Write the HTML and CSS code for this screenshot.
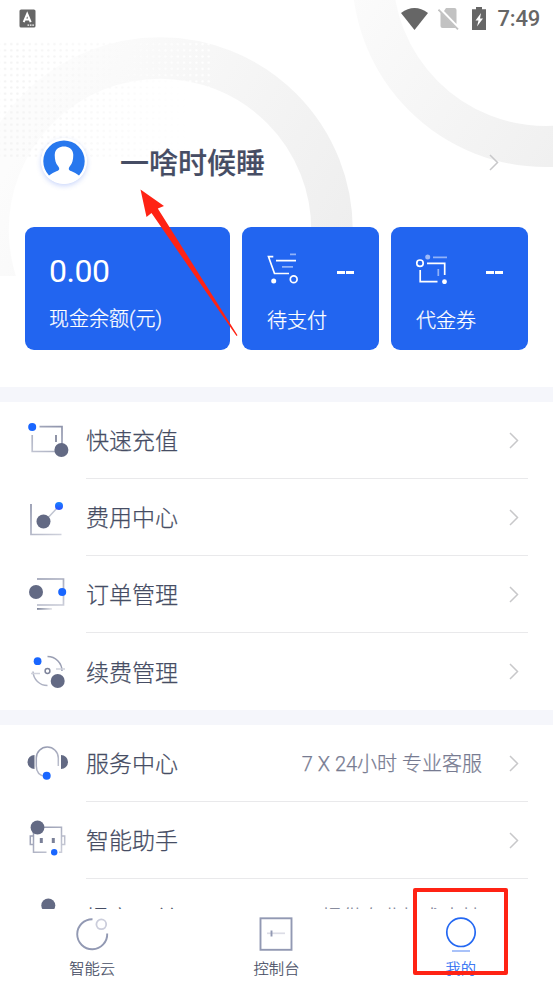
FILE: index.html
```
<!DOCTYPE html>
<html lang="zh-CN">
<head>
<meta charset="utf-8">
<title>我的</title>
<link rel="stylesheet" href="styles.css">
</head>
<body>
<div class="screen">
  <section class="hero">
    <svg class="hero-bg" width="553" height="276" viewBox="0 0 553 276">
      <defs>
        <linearGradient id="ringA" gradientUnits="userSpaceOnUse" x1="40" y1="110" x2="330" y2="276"><stop offset="0" stop-color="#fcfcfc"/><stop offset="1" stop-color="#eeeeee"/></linearGradient>
        <linearGradient id="ringB" gradientUnits="userSpaceOnUse" x1="350" y1="0" x2="560" y2="150"><stop offset="0" stop-color="#fbfbfb"/><stop offset="1" stop-color="#f0f0f0"/></linearGradient>
        <linearGradient id="dotFade" gradientUnits="userSpaceOnUse" x1="0" y1="0" x2="190" y2="0"><stop offset="0" stop-color="#f1f1f1"/><stop offset="1" stop-color="#fff"/></linearGradient>
        <pattern id="dots" patternUnits="userSpaceOnUse" x="2" y="41" width="6.17" height="6.2"><circle cx="3.1" cy="3.1" r="1.2" fill="#fff"/></pattern>
        <mask id="dotMask"><rect x="0" y="41" width="211" height="117" fill="url(#dots)"/></mask>
      </defs>
      <circle cx="160" cy="230" r="172" fill="none" stroke="url(#ringA)" stroke-width="41.5"/>
      <circle cx="546" cy="-27" r="173.5" fill="none" stroke="url(#ringB)" stroke-width="41"/>
      <rect x="0" y="41" width="211" height="117" fill="url(#dotFade)" mask="url(#dotMask)"/>
    </svg>
    <header class="status">
      <svg width="17" height="19" viewBox="0 0 17 19"><rect x=".5" y=".5" width="16" height="18" rx="1.6" fill="#666"/><path d="M4.7 13.2 8.2 4.9 11.7 13.2M6 10.6h4.400" fill="none" stroke="#fff" stroke-width="2"/><path d="M8.500 16.200h7" stroke="#fff" stroke-width="1.200" stroke-dasharray="1.6 .8"/></svg>
      <div class="status-right">
        <svg width="27" height="22" viewBox="0 0 27 22"><path d="M0 5Q13.500-5 27 5L13.500 22Z" fill="#666"/></svg>
        <svg class="sim" width="21" height="23" viewBox="0 0 21 23"><path d="M8 1h8.500q2 0 2 2v14L6 4Z" fill="#c2c2c2"/><path d="M2.500 5.500 18 21H4.500q-2 0-2-2Z" fill="#c2c2c2"/><path d="M1.500 1.500 20 20.500" stroke="#fff" stroke-width="1.500"/><path d="M.5 2.700 20 22.300" stroke="#c2c2c2" stroke-width="1.700"/></svg>
        <svg class="battery" width="14" height="23" viewBox="0 0 14 23"><path d="M4 0h6v2.300h4V23H0V2.300h4Z" fill="#666"/><path d="M9 6 3.500 13.500h3L5 19.500 11 11.500H8Z" fill="#fff"/></svg>
        <span class="time">7:49</span>
      </div>
    </header>
    <div class="profile">
      <svg class="avatar" width="46" height="46" viewBox="0 0 46 46"><circle cx="23" cy="23" r="23" fill="#fff"/><path d="M8 37.500A20.700 20.700 0 1 1 38 37.500Q34.500 34.500 30 33C27.500 32 27 30.500 29 28C31.500 25.500 32.500 20 32.200 16C31.500 10.500 27.500 8.500 23 8.500S14.500 10.500 13.800 16C13.500 20 14.500 25.500 17 28C19 30.500 18.500 32 16 33Q11.500 34.500 8 37.500Z" fill="#2878ee"/></svg>
      <h1 class="name">一啥时候睡</h1>
      <svg class="chev" width="10" height="17" viewBox="0 0 10 17"><path d="m1 1 7.500 7.500L1 16"/></svg>
    </div>
    <div class="cards">
      <div class="card balance"><div class="amount">0.00</div><div class="label">现金余额(元)</div></div>
      <div class="card">
        <div class="card-top">
          <svg width="32" height="31" viewBox="0 0 32 31" fill="none" stroke="#fff" stroke-width="1.700"><path d="M6.300 3.700H1.500L7.500 20.500H22M9 7.700H29"/><path d="M23 1.300h6M15 13.800h11" opacity=".5"/><circle cx="26.700" cy="26.300" r="3.400"/><circle cx="6.700" cy="28" r="2.500" fill="#fff" stroke="none"/></svg>
          <span class="dash"></span>
        </div>
        <div class="label">待支付</div>
      </div>
      <div class="card">
        <div class="card-top">
          <svg width="32" height="31" viewBox="0 0 32 31" fill="none" stroke="#fff" stroke-width="1.700"><circle cx="4" cy="10.200" r="3.200"/><path d="M11 10.300H28.700V22M4.200 17V28.700H21.500"/><path d="M17 4.300h14M22.300 16v7" opacity=".5"/><circle cx="11.700" cy="4" r="2.500" fill="#9db9f8" stroke="none"/><circle cx="28.500" cy="28.700" r="2.400" fill="#fff" stroke="none"/></svg>
          <span class="dash"></span>
        </div>
        <div class="label">代金券</div>
      </div>
    </div>
  </section>

  <section class="menu">
    <svg class="defs" width="0" height="0"><defs>
      <linearGradient id="ln" gradientUnits="userSpaceOnUse" x1="40" y1="0" x2="6" y2="40"><stop offset="0" stop-color="#858ba4"/><stop offset="1" stop-color="#c9ccd8"/></linearGradient>
      <linearGradient id="ln2" gradientUnits="userSpaceOnUse" x1="4" y1="0" x2="34" y2="40"><stop offset="0" stop-color="#858ba4"/><stop offset="1" stop-color="#d2d4de"/></linearGradient>
      <linearGradient id="bl" x1="0" y1="0" x2="0" y2="1"><stop offset="0" stop-color="#1683ff"/><stop offset="1" stop-color="#2c4dff"/></linearGradient>
      <linearGradient id="fd"><stop offset="0" stop-color="#7c8399"/><stop offset="1" stop-color="#e6e7ec"/></linearGradient>
    </defs></svg>
    <div class="row">
      <svg class="icon" width="44" height="40" viewBox="0 0 44 40"><path d="M13.500 6.700H36V24M6.200 15V31.500H29" fill="none" stroke="url(#ln)" stroke-width="1.700"/><path d="M30 15v7" stroke="#7c8298" stroke-width="1.700"/><circle cx="6.200" cy="7" r="4" fill="#1966ff"/><circle cx="35.400" cy="30" r="7" fill="#636a84"/></svg>
      <div class="cell"><span>快速充值</span><svg class="chev" width="10" height="17" viewBox="0 0 10 17"><path d="m1 1 7.500 7.500L1 16"/></svg></div>
    </div>
    <div class="row">
      <svg class="icon" width="44" height="40" viewBox="0 0 44 40"><path d="M5 7V37.500H35.500" fill="none" stroke="url(#ln2)" stroke-width="1.700"/><path d="M18 25 33 9" stroke="#bfc3d0" stroke-width="1.500"/><circle cx="33" cy="9" r="4" fill="url(#bl)"/><circle cx="17.500" cy="24.500" r="7" fill="#636a84"/></svg>
      <div class="cell"><span>费用中心</span><svg class="chev" width="10" height="17" viewBox="0 0 10 17"><path d="m1 1 7.500 7.500L1 16"/></svg></div>
    </div>
    <div class="row">
      <svg class="icon" width="44" height="40" viewBox="0 0 44 40"><path d="M11 5H37.500V31H11" fill="none" stroke="url(#ln2)" stroke-width="1.700"/><rect x="11" y="34" width="15" height="1.800" fill="url(#fd)"/><circle cx="10" cy="18" r="7" fill="#636a84"/><circle cx="36.200" cy="18" r="4" fill="#1966ff"/></svg>
      <div class="cell"><span>订单管理</span><svg class="chev" width="10" height="17" viewBox="0 0 10 17"><path d="m1 1 7.500 7.500L1 16"/></svg></div>
    </div>
    <div class="row">
      <svg class="icon" width="44" height="40" viewBox="0 0 44 40"><g fill="none" stroke-width="1.500"><path d="M21.500 5.500A14.500 14.500 0 0 1 36 20" stroke="#9a9fb3"/><path d="M7 20.500A14.500 14.500 0 0 0 21.500 34.500" stroke="#aeb2c3"/><path d="M30 18h9M5 22.500h9" stroke="#d0d2dc"/><circle cx="21.500" cy="20" r="2.400" stroke="#7d839a"/></g><circle cx="11.600" cy="10.200" r="3.900" fill="#1966ff"/><circle cx="31.700" cy="30" r="7" fill="#636a84"/></svg>
      <div class="cell"><span>续费管理</span><svg class="chev" width="10" height="17" viewBox="0 0 10 17"><path d="m1 1 7.500 7.500L1 16"/></svg></div>
    </div>
  </section>

  <section class="menu">
    <div class="row">
      <svg class="icon" width="44" height="40" viewBox="0 0 44 40"><path d="M8.500 12v14a7 7 0 0 1 0-14ZM35 12v14a7 7 0 0 0 0-14Z" fill="#636a84"/><path d="M32.300 23V15a11 11 0 0 0-22 0v8q0 9 9 10.500" fill="none" stroke="url(#ln2)" stroke-width="1.500"/><circle cx="20.700" cy="32.800" r="4" fill="#1966ff"/></svg>
      <div class="cell"><span>服务中心</span><span class="note">7 X 24小时 专业客服</span><svg class="chev" width="10" height="17" viewBox="0 0 10 17"><path d="m1 1 7.500 7.500L1 16"/></svg></div>
    </div>
    <div class="row">
      <svg class="icon" width="44" height="40" viewBox="0 0 44 40"><g fill="none" stroke="url(#ln2)" stroke-width="1.500"><path d="M20.500 32.200H7.500V7.200H35.500V32.200H33M7.500 16H4.300V24.500H7.500M35.500 16H38.700V24.500H35.500"/></g><path d="M15.300 18v5M27.300 18v5" stroke="#7a8098" stroke-width="3"/><circle cx="11.500" cy="7.500" r="6.900" fill="#636a84"/><circle cx="28.200" cy="32.300" r="3.200" fill="#1966ff"/></svg>
      <div class="cell"><span>智能助手</span><svg class="chev" width="10" height="17" viewBox="0 0 10 17"><path d="m1 1 7.500 7.500L1 16"/></svg></div>
    </div>
    <div class="row">
      <svg class="icon" width="44" height="40" viewBox="0 0 44 40"><circle cx="22.300" cy="8.500" r="7" fill="#636a84"/></svg>
      <div class="cell"><span>提交工单</span><span class="note">提供专业技术支持</span><svg class="chev" width="10" height="17" viewBox="0 0 10 17"><path d="m1 1 7.500 7.500L1 16"/></svg></div>
    </div>
  </section>

  <nav class="tabs">
    <div class="tab"><svg width="36" height="36" viewBox="0 0 36 36" fill="none"><path d="M18.500 3.200A15 15 0 1 0 33.200 17.500" stroke="#9299b3" stroke-width="1.900"/><circle cx="27.300" cy="8.300" r="4.900" stroke="#cbcddb" stroke-width="1.800"/></svg><span>智能云</span></div>
    <div class="tab"><svg width="36" height="36" viewBox="0 0 36 36" fill="none"><rect x="2.500" y="2.300" width="31" height="31.500" stroke="#9299b3" stroke-width="1.900"/><path d="M9 17.300H27" stroke="#dcdde6" stroke-width="1.700"/><path d="M13.500 14.500v6" stroke="#9299b3" stroke-width="1.900"/></svg><span>控制台</span></div>
    <div class="tab active"><svg width="36" height="36" viewBox="0 0 36 36" fill="none"><circle cx="18" cy="16.300" r="14.200" stroke="#2468f2" stroke-width="1.700"/><path d="M9 35H27" stroke="#9ab8f8" stroke-width="1.700"/></svg><span>我的</span></div>
  </nav>

  <svg class="arrow" width="110" height="156" viewBox="0 0 110 156"><path d="M5.500 2.500 29 19 22.800 21.500 102.500 148.300 101.500 149 16.500 26 11.500 30Z" fill="#ff2314"/></svg>
  <div class="frame"></div>
</div>
</body>
</html>
```
FILE: styles.css
```
* { box-sizing: border-box; }
body { margin: 0; background: #fff; }
svg { display: block; flex: none; }
.screen {
  position: relative;
  width: 553px;
  height: 983px;
  overflow: hidden;
  display: flex;
  flex-direction: column;
  background: #fff;
  font-family: Roboto, "Noto Sans CJK SC", sans-serif;
  color: #464d64;
}
.hero { position: relative; flex: none; height: 387px; }
.hero-bg { position: absolute; left: 0; top: 0; z-index: 0; }
.status, .profile, .cards { position: relative; z-index: 1; }
.status {
  height: 40px;
  padding: 0 13px 3px 19px;
  display: flex;
  align-items: center;
  justify-content: space-between;
}
.status-right { display: flex; align-items: center; }
.sim { margin-left: 10px; }
.battery { margin-left: 13px; }
.time { margin-left: 11px; font-size: 22px; line-height: 26px; font-weight: 500; color: #666; letter-spacing: -.2px; }
.profile { height: 187px; padding: 58px 54px 0 41px; display: flex; align-items: center; }
.avatar { border-radius: 50%; box-shadow: 0 2px 5px rgba(50, 100, 240, .25); margin-top: -4px; }
.name { flex: 1; margin: 2px 0 0 33px; font-size: 29px; line-height: 40px; font-weight: 500; -webkit-text-stroke: .2px #464d64; }
.chev { fill: none; stroke: #c8c8ca; stroke-width: 1.5; }
.cards { display: grid; grid-template-columns: 205px 137px 137px; gap: 12px; padding: 0 25px; height: 123px; }
.card { border-radius: 9px; background: #2265f0; color: #fff; padding: 26px 25px 0; }
.balance { padding-left: 24px; }
.amount { font-size: 32px; line-height: 36px; letter-spacing: -.5px; }
.label { font-size: 20px; line-height: 30px; white-space: nowrap; font-weight: 300; -webkit-text-stroke: .25px currentColor; }
.balance .label { margin-top: 15px; }
.card-top { display: flex; align-items: flex-start; justify-content: space-between; height: 41px; margin-bottom: 12px; }
.dash { width: 17px; height: 2.5px; margin-top: 18px; background: linear-gradient(90deg, #fff 8px, transparent 8px, transparent 9px, #fff 9px); }
.menu { flex: none; border-top: 15px solid #f5f6fb; }
.defs { position: absolute; }
.row { display: flex; align-items: center; height: 77px; padding: 0 25px 0 26px; }
.icon { margin: -2px 16px 0 0; }
.cell {
  flex: 1;
  height: 100%;
  display: flex;
  align-items: center;
  padding-right: 9px;
  border-bottom: 1.5px solid #e9e9eb;
  font-size: 23px;
  font-weight: 300;
  -webkit-text-stroke: .25px currentColor;
}
.cell span { margin-top: -2px; }
.cell .chev { margin-left: auto; }
.row:last-child .cell { border-bottom: 0; }
.cell .note { margin-left: auto; font-size: 20px; color: #777b91; }
.cell .note + .chev { margin-left: 27px; }
.tabs {
  position: absolute;
  left: 0;
  right: 0;
  bottom: 0;
  height: 74px;
  display: grid;
  grid-template-columns: repeat(3, 1fr);
  background: #fff;
}
.tab { display: flex; flex-direction: column; align-items: center; padding-top: 7px; font-size: 15.3px; font-weight: 300; -webkit-text-stroke: .2px currentColor; }
.tab span { line-height: 22px; margin-top: 6px; }
.active { color: #2468f2; }
.arrow { position: absolute; left: 135px; top: 187px; z-index: 2; }
.frame { position: absolute; left: 413px; top: 888px; width: 95px; height: 87px; border: 4px solid #ff2314; border-radius: 2px; z-index: 3; }
```
